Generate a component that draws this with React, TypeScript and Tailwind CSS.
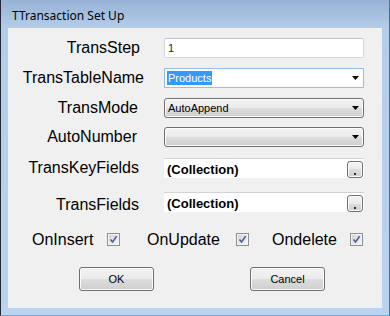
import React from 'react';

// Windows 7 style dialog: TTransaction Set Up

const btnFace =
  'border border-[#707070] rounded-[3px] bg-[linear-gradient(to_bottom,#f2f2f2_0%,#ebebeb_50%,#dddddd_50%,#cfcfcf_100%)] shadow-[inset_0_0_0_1px_#fbfbfb]';

function Arrow() {
  return (
    <svg width="7" height="4" viewBox="0 0 7 4" className="shrink-0">
      <polygon points="0,0 7,0 3.5,4" fill="#000" />
    </svg>
  );
}

function Label({ text, shift = 0, drop = 0 }: { text: string; shift?: number; drop?: number }) {
  return (
    <div
      className="w-[132px] shrink-0 text-right text-[16px] leading-[20px] text-black whitespace-nowrap"
      style={{ transform: `translate(${shift}px, ${drop}px)` }}
    >
      {text}
    </div>
  );
}

function Row({ children, className }: { children: React.ReactNode; className?: string }) {
  return <div className={`flex items-center h-[20px] ${className ?? ''}`}>{children}</div>;
}

function CollectionField() {
  return (
    <div className="ml-[24px] w-[200px] h-[20px] bg-white border-t border-[#d0d2d6] flex">
      <div className="flex-1 pl-[3px] pt-[3px] flex items-center text-[13px] font-bold text-black">
        (Collection)
      </div>
      <div className="pt-[2px] pr-[1px] flex">
        <div className={`w-[16px] h-[17px] flex items-end justify-center pb-[2px] ${btnFace}`}>
          <div className="w-[2px] h-[2px] bg-[#1c2c4c]" />
        </div>
      </div>
    </div>
  );
}

function Check() {
  return (
    <div className="w-[13px] h-[13px] shrink-0 border border-[#8e8f8f] bg-[#f4f4f4] p-[1px]">
      <div className="w-full h-full bg-[linear-gradient(135deg,#cfd3da,#f6f6f6)] flex items-center justify-center">
        <svg width="9" height="9" viewBox="0 0 9 9">
          <path d="M1.5 4.5 L3.6 7 L7.6 1.2" stroke="#4b5d92" strokeWidth="1.5" fill="none" />
        </svg>
      </div>
    </div>
  );
}

export default function App() {
  return (
    <div className="w-[390px] h-[316px] flex flex-col border-l border-l-[#1f2a36] border-r border-r-[#2d7c98] border-b border-b-[#3fc2dc] bg-[linear-gradient(to_bottom,#97b2d4_0px,#b4cdea_28px,#bbd3ee_100%)] font-['Liberation_Sans',Arial,sans-serif] select-none">
      <div className="h-[28px] shrink-0 pl-[11px] pt-[4px] flex items-center text-[12px] text-black font-['Noto_Sans',sans-serif]">
        TTransaction Set Up
      </div>
      <div className="flex-1 mx-[7px] mb-[7px] bg-[#f0f0f0] flex flex-col pt-[10px]">
        <Row>
          <Label text="TransStep" />
          <div className="ml-[24px] w-[200px] h-[20px] bg-white border border-[#d5d7da] border-t-[#c2c4c8] rounded-[2px] flex items-center pl-[3px] text-[11px] text-[#1a1a40]">
            1
          </div>
        </Row>
        <Row className="mt-[10px]">
          <Label text="TransTableName" shift={4} />
          <div className="ml-[24px] w-[200px] h-[20px] bg-white border border-[#93bfec] flex items-center pl-[2px] pr-[4px]">
            <span className="h-[14px] px-[1px] bg-[#3399ff] text-white text-[11px] leading-[14px]">Products</span>
            <div className="flex-1" />
            <Arrow />
          </div>
        </Row>
        <Row className="mt-[10px]">
          <Label text="TransMode" shift={-2} />
          <div className={`ml-[24px] w-[200px] h-[20px] flex items-center pl-[3px] pr-[4px] text-[11px] text-black ${btnFace}`}>
            <span>AutoAppend</span>
            <div className="flex-1" />
            <Arrow />
          </div>
        </Row>
        <Row className="mt-[9px]">
          <Label text="AutoNumber" shift={-3} />
          <div className={`ml-[24px] w-[200px] h-[20px] flex items-center pl-[3px] pr-[4px] ${btnFace}`}>
            <div className="flex-1" />
            <Arrow />
          </div>
        </Row>
        <Row className="mt-[11px]">
          <Label text="TransKeyFields" shift={-1} />
          <CollectionField />
        </Row>
        <Row className="mt-[14px]">
          <Label text="TransFields" shift={-1} drop={3} />
          <CollectionField />
        </Row>
        <div className="mt-[21px] h-[13px] flex items-center text-[16px] text-black">
          <div className="ml-[24px] flex items-center">
            <span className="w-[75px]">OnInsert</span>
            <Check />
          </div>
          <div className="ml-[27px] flex items-center">
            <span className="w-[89px]">OnUpdate</span>
            <Check />
          </div>
          <div className="ml-[23px] flex items-center">
            <span className="w-[78px]">Ondelete</span>
            <Check />
          </div>
        </div>
        <div className="mt-[21px] flex">
          <button className={`ml-[71px] w-[75px] h-[24px] text-[11px] text-black ${btnFace}`}>OK</button>
          <button className={`ml-[96px] w-[75px] h-[24px] text-[11px] text-black ${btnFace}`}>Cancel</button>
        </div>
      </div>
    </div>
  );
}
